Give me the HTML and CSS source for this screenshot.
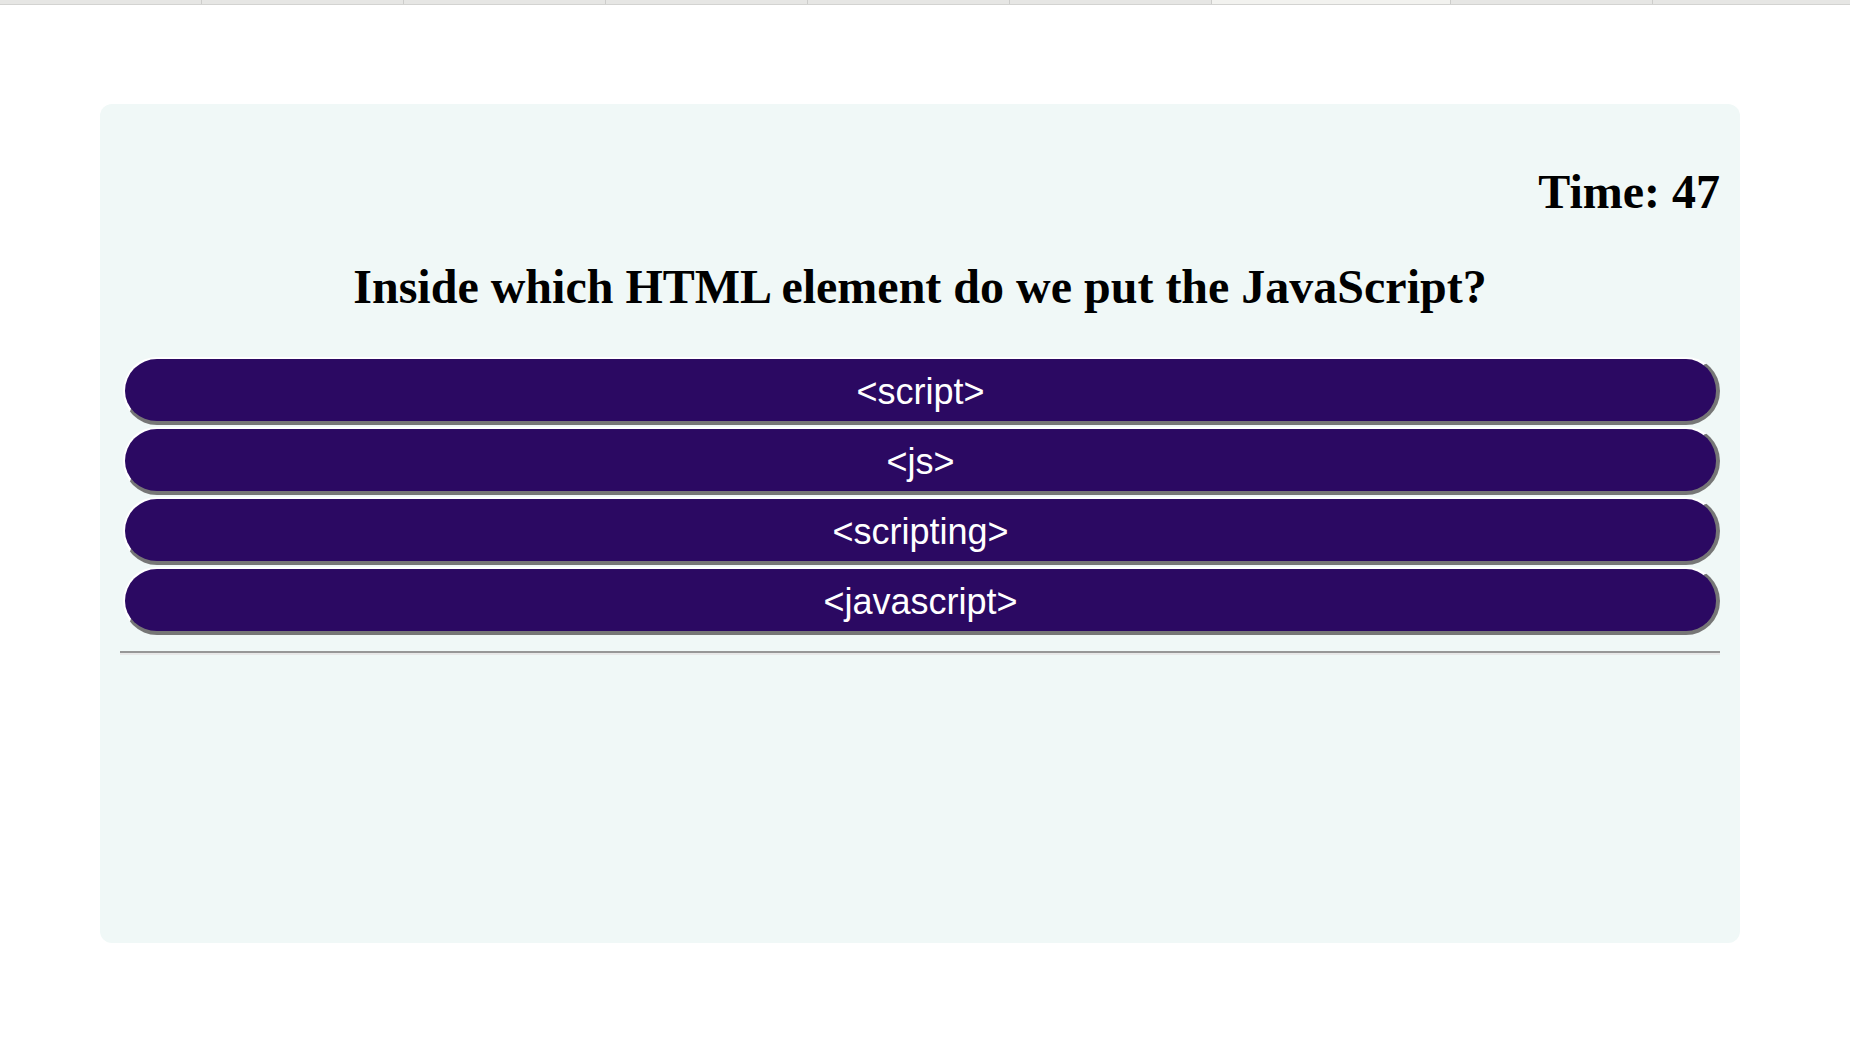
FILE: index.html
```html
<!DOCTYPE html>
<html lang="en">
<head>
<meta charset="utf-8">
<title>Quiz</title>
<link rel="stylesheet" href="styles.css">
</head>
<body>
<div class="tabstrip">
  <div class="tab"></div>
  <div class="tab"></div>
  <div class="tab"></div>
  <div class="tab"></div>
  <div class="tab"></div>
  <div class="tab"></div>
  <div class="tab active"></div>
  <div class="tab"></div>
  <div class="tab last"></div>
</div>
<main class="card">
  <div class="timer">Time: 47</div>
  <h2 class="question">Inside which HTML element do we put the JavaScript?</h2>
  <div class="answers">
    <button class="answer">&lt;script&gt;</button>
    <button class="answer">&lt;js&gt;</button>
    <button class="answer">&lt;scripting&gt;</button>
    <button class="answer">&lt;javascript&gt;</button>
  </div>
  <hr class="divider">
</main>
</body>
</html>
```

FILE: styles.css
```css
html, body {
  margin: 0;
  padding: 0;
  background: #ffffff;
}

body {
  font-family: "Liberation Serif", "Times New Roman", serif;
}

.tabstrip {
  display: flex;
  height: 4px;
  background: #e6e6e4;
  border-bottom: 1px solid #d3d3d1;
}

.tab {
  width: 201px;
  border-right: 1px solid #cdcdcb;
}

.tab.active {
  width: 238px;
  background: #f2f2ef;
}

.tab.last {
  flex: 1;
  border-right: none;
}

.card {
  box-sizing: border-box;
  width: 1640px;
  height: 839px;
  margin: 99px 0 0 100px;
  padding: 20px 20px 0;
  background: #f0f8f7;
  border-radius: 12px;
  overflow: hidden;
}

.timer {
  margin-top: 40px;
  font-size: 48px;
  line-height: 56px;
  font-weight: bold;
  text-align: right;
  color: #000;
}

.question {
  margin: 39px 0 0;
  font-size: 48px;
  line-height: 56px;
  font-weight: bold;
  text-align: center;
  color: #000;
}

.answers {
  display: flex;
  flex-direction: column;
  gap: 2px;
  margin: 42px 0 0 3px;
}

.answer {
  box-sizing: border-box;
  display: block;
  width: 100%;
  height: 68px;
  margin: 0;
  padding: 3px 0 0;
  background: #2b0962;
  color: #ffffff;
  font-family: "Liberation Sans", Arial, sans-serif;
  font-size: 36px;
  line-height: 1;
  text-align: center;
  border-style: solid;
  border-width: 2px 4px 4px 2px;
  border-color: #ffffff #767676 #767676 #ffffff;
  border-radius: 50px;
  cursor: pointer;
}

.divider {
  margin: 16px 0 0;
  height: 0;
  border: none;
  border-top: 2px solid #979797;
  border-bottom: 2px solid #e8e8e8;
}
```
